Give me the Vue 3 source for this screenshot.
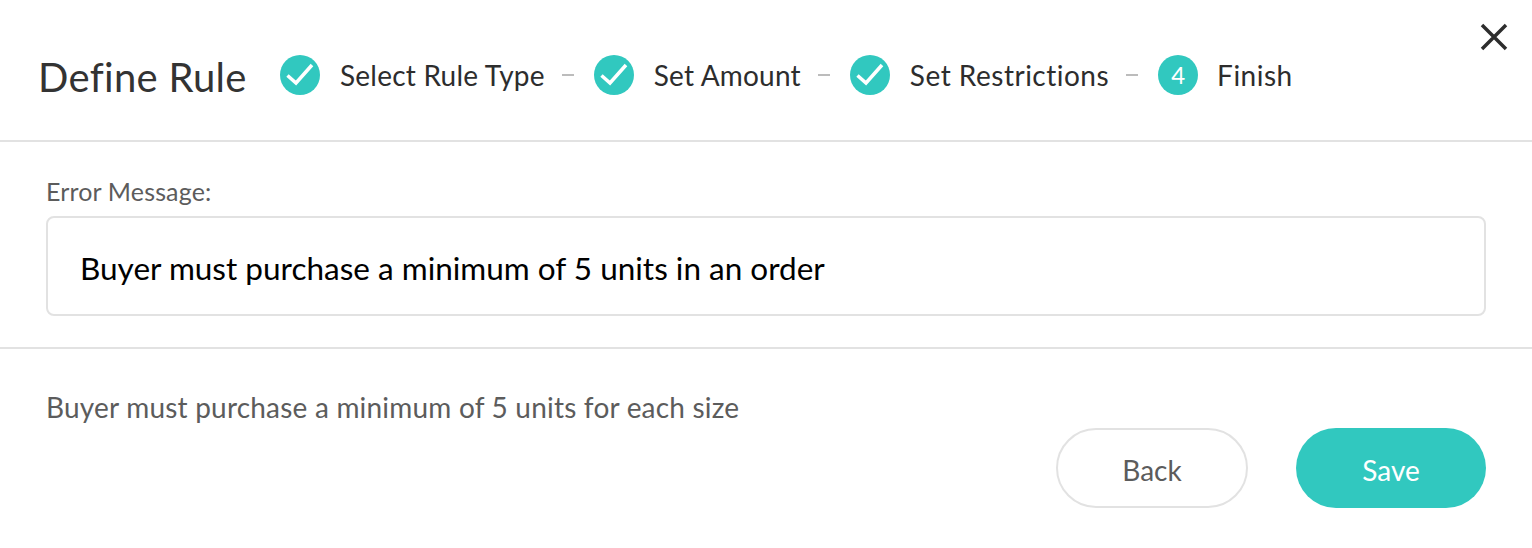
<script setup>
const steps = [
  { label: 'Select Rule Type', done: true },
  { label: 'Set Amount', done: true },
  { label: 'Set Restrictions', done: true },
  { label: 'Finish', done: false, num: 4 }
]
</script>

<template>
  <div class="dialog">
    <header class="head">
      <h1 class="title">Define Rule</h1>
      <ol class="steps">
        <li v-for="(s, i) in steps" :key="s.label" class="step">
          <span class="circle">
            <svg v-if="s.done" width="40" height="40" viewBox="0 0 40 40">
              <path d="M7.5 20.5 L16 28 L32 10" fill="none" stroke="#fff" stroke-width="3.500" />
            </svg>
            <template v-else>{{ s.num }}</template>
          </span>
          <span class="step-label">{{ s.label }}</span>
          <span v-if="i < steps.length - 1" class="dash"></span>
        </li>
      </ol>
      <button class="close" aria-label="Close">
        <svg width="28" height="28" viewBox="0 0 28 28">
          <path d="M2 2 L26 26 M26 2 L2 26" fill="none" stroke="#2d2d2d" stroke-width="3.500" />
        </svg>
      </button>
    </header>

    <section class="body">
      <label class="label">Error Message:</label>
      <div class="input">Buyer must purchase a minimum of 5 units in an order</div>
    </section>

    <footer class="foot">
      <p class="desc">Buyer must purchase a minimum of 5 units for each size</p>
      <div class="actions">
        <button class="btn back">Back</button>
        <button class="btn save">Save</button>
      </div>
    </footer>
  </div>
</template>

<style>
html, body {
  margin: 0;
  background: #fff;
}
</style>

<style scoped>
.dialog {
  width: 1532px;
  height: 548px;
  font-family: Lato, "Open Sans", sans-serif;
  font-variant-ligatures: none;
  color: #2d2d2d;
  overflow: hidden;
}

.head {
  position: relative;
  height: 127px;
  border-bottom: 2px solid #e2e2e2;
  display: flex;
  align-items: center;
  padding: 13px 0 0 38px;
}

.title {
  margin: 0;
  font-size: 40px;
  font-weight: 400;
  line-height: 48px;
  letter-spacing: 0.3px;
  width: 242px;
  color: #333;
}

.steps {
  list-style: none;
  margin: -4px 0 0;
  padding: 0;
  display: flex;
  align-items: center;
}

.step {
  display: flex;
  align-items: center;
}

.circle {
  width: 40px;
  height: 40px;
  border-radius: 50%;
  background: #31c8bf;
  color: #fff;
  font-size: 24px;
  display: flex;
  align-items: center;
  justify-content: center;
  margin-right: 20px;
}

.step-label {
  font-size: 28px;
  line-height: 40px;
  letter-spacing: 0.22px;
}

.step:nth-child(3) .step-label {
  letter-spacing: 0.5px;
}

.step:nth-child(4) .circle {
  margin-right: 19px;
}

.step:nth-child(4) .step-label {
  letter-spacing: 0.5px;
}

.dash {
  width: 12px;
  height: 2px;
  background: #bcbcbc;
  margin: 0 20px 0 17px;
}

.close {
  position: absolute;
  top: 23px;
  right: 24px;
  width: 28px;
  height: 28px;
  padding: 0;
  border: 0;
  background: none;
  display: block;
}

.body {
  padding: 34px 46px 31px;
  border-bottom: 2px solid #e2e2e2;
}

.label {
  display: block;
  font-size: 25px;
  line-height: 30px;
  letter-spacing: 0.15px;
  color: #5c5c5c;
  margin-bottom: 10px;
}

.input {
  border: 2px solid #e2e2e2;
  border-radius: 8px;
  padding: 4px 32px 0;
  height: 92px;
  display: flex;
  align-items: center;
  font-size: 31.5px;
  color: #000;
}

.foot {
  display: flex;
  justify-content: space-between;
  padding: 38px 46px 0 46px;
}

.desc {
  margin: 0;
  font-size: 28px;
  line-height: 40px;
  letter-spacing: 0.2px;
  color: #5c5c5c;
}

.actions {
  display: flex;
  gap: 48px;
  margin-top: 41px;
}

.btn {
  height: 80px;
  border-radius: 40px;
  font-family: inherit;
  font-size: 28px;
  padding: 3px 0 0;
}

.back {
  width: 192px;
  background: #fff;
  border: 2px solid #e2e2e2;
  color: #5c5c5c;
}

.save {
  width: 190px;
  background: #31c8bf;
  border: 0;
  color: #fff;
}
</style>
